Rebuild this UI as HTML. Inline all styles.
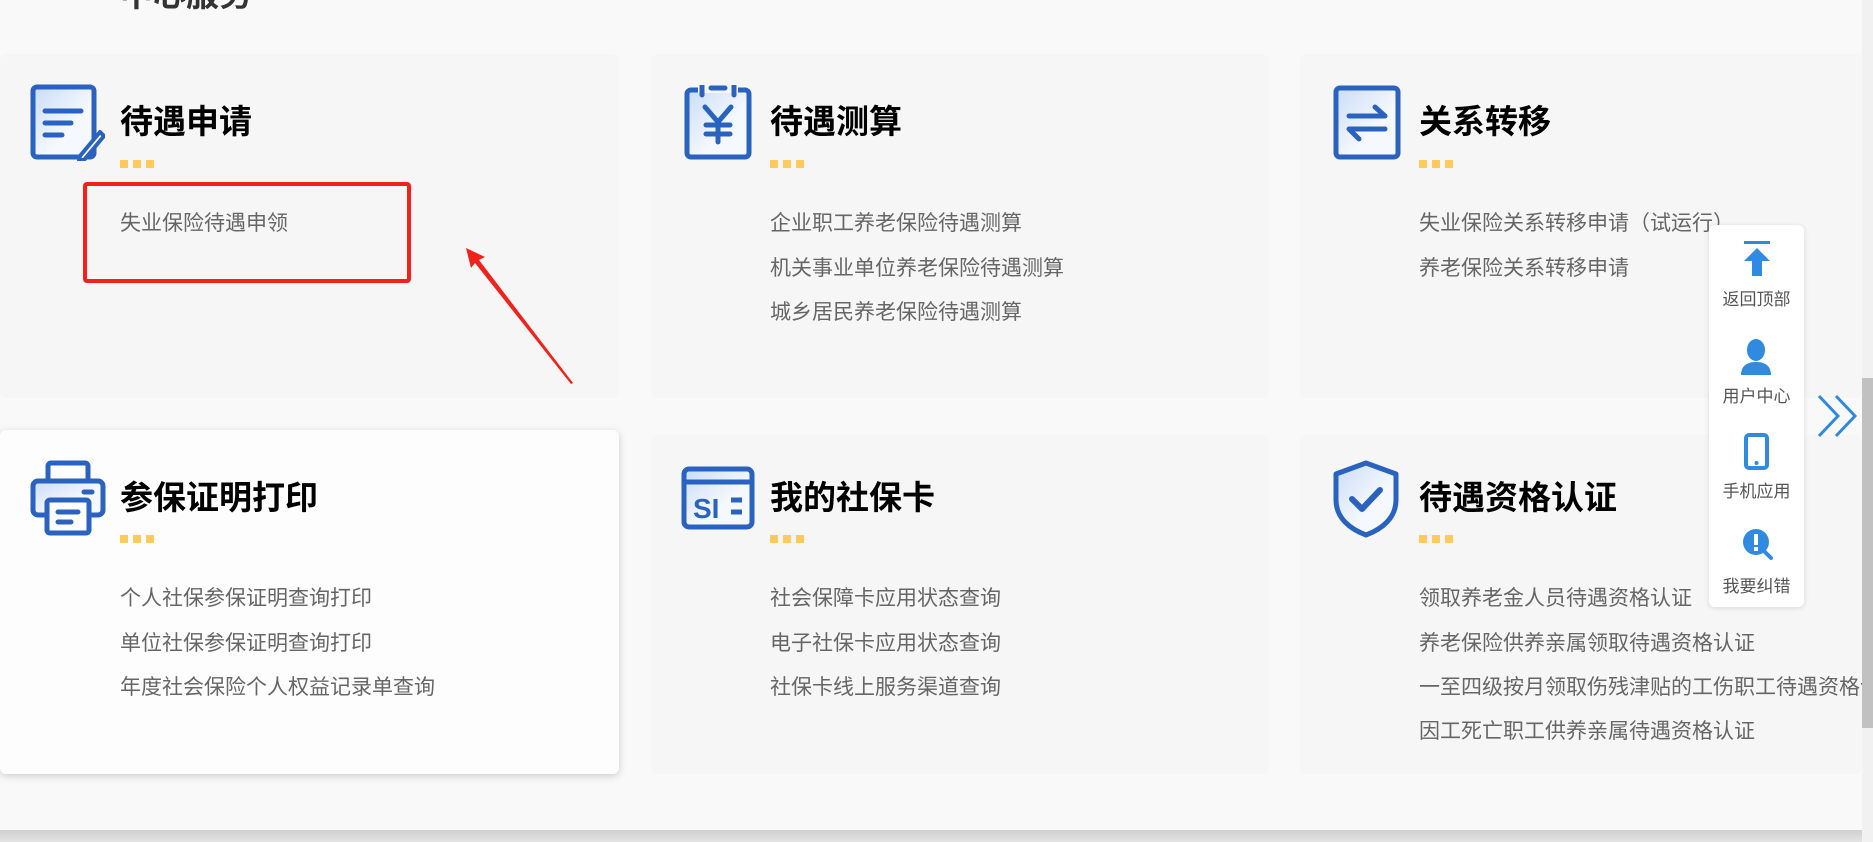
<!DOCTYPE html>
<html><head><meta charset="utf-8"><style>
*{margin:0;padding:0;box-sizing:border-box}
body{width:1873px;height:842px;overflow:hidden;background:#f9f9f9;font-family:"Liberation Sans","Noto Sans CJK SC",sans-serif;position:relative}
.card{position:absolute;background:#f6f6f6;border-radius:6px}
.card.hl{background:#fdfdfd;box-shadow:0 2px 8px rgba(0,0,0,.18)}
.ic{position:absolute}
.t{position:absolute;font-size:33px;font-weight:bold;color:#000;white-space:nowrap;line-height:40px}
.dots{position:absolute;width:40px;height:8px}
.dots i{display:inline-block;width:8px;height:8px;background:#ffc95c;margin-right:5px;vertical-align:top}
.l{position:absolute;font-size:21px;color:#666;white-space:nowrap;line-height:26px}
.side{position:absolute;left:1709px;top:225px;width:95px;height:382px;background:#fff;border-radius:6px;box-shadow:0 1px 6px rgba(0,0,0,.12)}
.side .lb{position:absolute;left:0;width:95px;text-align:center;font-size:17px;color:#555}
</style></head><body>
<div style="position:absolute;left:120px;top:-32px;font-size:33px;font-weight:bold;color:#333">中心服务</div>

<div class="card" style="left:0;top:54px;width:619px;height:344px"></div>
<div class="card" style="left:651px;top:54px;width:618px;height:344px"></div>
<div class="card" style="left:1300px;top:54px;width:562px;height:344px"></div>
<div class="card hl" style="left:0;top:430px;width:619px;height:344px"></div>
<div class="card" style="left:651px;top:435px;width:618px;height:339px"></div>
<div class="card" style="left:1300px;top:435px;width:562px;height:339px"></div>

<svg width="0" height="0" style="position:absolute"><defs><linearGradient id="g" x1="0" y1="0" x2="1" y2="1"><stop offset="0" stop-color="#c9dcf8"/><stop offset=".6" stop-color="#f5f8fd"/></linearGradient></defs></svg>

<svg class="ic" style="left:30px;top:84px" width="75" height="77" viewBox="0 0 75 77"><rect x="3" y="3" width="61" height="70" rx="4" fill="url(#g)" stroke="#2a62c0" stroke-width="5"/><path d="M15 27h36M15 39h26M15 51h17" stroke="#2a62c0" stroke-width="5" stroke-linecap="round"/><path d="M50 72l20-24 4 4-20 24h-5z" fill="#fff" stroke="#2a62c0" stroke-width="4" stroke-linejoin="round"/></svg>
<div class="t" style="left:120px;top:102px">待遇申请</div>
<div class="dots" style="left:120px;top:160px"><i></i><i></i><i></i></div>
<div class="l" style="left:120px;top:211px">失业保险待遇申领</div>

<svg class="ic" style="left:684px;top:85px" width="68" height="75" viewBox="0 0 68 75"><rect x="3" y="5" width="62" height="67" rx="4" fill="url(#g)" stroke="#2a62c0" stroke-width="5"/><rect x="14" y="0" width="40" height="8" fill="#f6f6f6"/><path d="M18 1v9M50 1v9M27 3h14" stroke="#2a62c0" stroke-width="5" stroke-linecap="round"/><path d="M21 22l13 15 13-15M34 37v20M22 40h24M22 49h24" stroke="#2a62c0" stroke-width="5" stroke-linecap="round" fill="none"/></svg>
<div class="t" style="left:770px;top:102px">待遇测算</div>
<div class="dots" style="left:770px;top:160px"><i></i><i></i><i></i></div>
<div class="l" style="left:770px;top:211px">企业职工养老保险待遇测算</div>
<div class="l" style="left:770px;top:256px">机关事业单位养老保险待遇测算</div>
<div class="l" style="left:770px;top:300px">城乡居民养老保险待遇测算</div>

<svg class="ic" style="left:1333px;top:85px" width="68" height="75" viewBox="0 0 68 75"><rect x="3" y="3" width="62" height="69" rx="4" fill="url(#g)" stroke="#2a62c0" stroke-width="5"/><path d="M16 31h36l-10-9M52 44H16l10 10" stroke="#2a62c0" stroke-width="5" stroke-linecap="round" stroke-linejoin="round" fill="none"/></svg>
<div class="t" style="left:1419px;top:102px">关系转移</div>
<div class="dots" style="left:1419px;top:160px"><i></i><i></i><i></i></div>
<div class="l" style="left:1419px;top:211px">失业保险关系转移申请（试运行）</div>
<div class="l" style="left:1419px;top:256px">养老保险关系转移申请</div>

<svg class="ic" style="left:30px;top:460px" width="76" height="76" viewBox="0 0 76 76"><rect x="18" y="3" width="40" height="20" rx="3" fill="#fff" stroke="#2a62c0" stroke-width="5"/><rect x="3" y="21" width="70" height="34" rx="5" fill="url(#g)" stroke="#2a62c0" stroke-width="5"/><path d="M54 32h8" stroke="#2a62c0" stroke-width="5" stroke-linecap="round"/><rect x="17" y="40" width="42" height="33" rx="3" fill="#fff" stroke="#2a62c0" stroke-width="5"/><path d="M28 52h20M28 62h13" stroke="#2a62c0" stroke-width="5" stroke-linecap="round"/></svg>
<div class="t" style="left:120px;top:478px">参保证明打印</div>
<div class="dots" style="left:120px;top:535px"><i></i><i></i><i></i></div>
<div class="l" style="left:120px;top:586px">个人社保参保证明查询打印</div>
<div class="l" style="left:120px;top:631px">单位社保参保证明查询打印</div>
<div class="l" style="left:120px;top:675px">年度社会保险个人权益记录单查询</div>

<svg class="ic" style="left:681px;top:466px" width="74" height="64" viewBox="0 0 74 64"><rect x="3" y="3" width="68" height="58" rx="5" fill="url(#g)" stroke="#2a62c0" stroke-width="5"/><path d="M3 16h68" stroke="#2a62c0" stroke-width="5"/><text x="12" y="52" font-family="Liberation Sans,sans-serif" font-weight="bold" font-size="28" fill="#2a62c0">SI</text><path d="M50 34h11M50 46h11" stroke="#2a62c0" stroke-width="5"/></svg>
<div class="t" style="left:770px;top:478px">我的社保卡</div>
<div class="dots" style="left:770px;top:535px"><i></i><i></i><i></i></div>
<div class="l" style="left:770px;top:586px">社会保障卡应用状态查询</div>
<div class="l" style="left:770px;top:631px">电子社保卡应用状态查询</div>
<div class="l" style="left:770px;top:675px">社保卡线上服务渠道查询</div>

<svg class="ic" style="left:1332px;top:460px" width="68" height="78" viewBox="0 0 68 78"><path d="M34 3L64 14v26c0 18-14 29-30 35C18 69 4 58 4 40V14z" fill="url(#g)" stroke="#2a62c0" stroke-width="5" stroke-linejoin="round"/><path d="M20 39l10 10 18-19" stroke="#2a62c0" stroke-width="6" fill="none" stroke-linecap="round" stroke-linejoin="round"/></svg>
<div class="t" style="left:1419px;top:478px">待遇资格认证</div>
<div class="dots" style="left:1419px;top:535px"><i></i><i></i><i></i></div>
<div class="l" style="left:1419px;top:586px">领取养老金人员待遇资格认证</div>
<div class="l" style="left:1419px;top:631px">养老保险供养亲属领取待遇资格认证</div>
<div class="l" style="left:1419px;top:675px;width:443px;overflow:hidden">一至四级按月领取伤残津贴的工伤职工待遇资格认证</div>
<div class="l" style="left:1419px;top:719px">因工死亡职工供养亲属待遇资格认证</div>

<div style="position:absolute;left:83px;top:182px;width:328px;height:101px;border:4px solid #f2211a;border-radius:4px"></div>
<svg style="position:absolute;left:0;top:0" width="700" height="420"><path d="M466 248L471 268 475 263 571 384 573 383 479 260 485 257z" fill="#f2211a"/></svg>

<div class="side">
<svg style="position:absolute;left:32px;top:16px" width="32" height="36" viewBox="0 0 32 36"><rect x="3" y="0" width="26" height="3" fill="#2f8ae0"/><path d="M16 7L3 20h8v15h10V20h8z" fill="#2f8ae0"/></svg>
<div class="lb" style="top:60px">返回顶部</div>
<svg style="position:absolute;left:31px;top:114px" width="32" height="36" viewBox="0 0 32 36"><ellipse cx="16" cy="11" rx="9" ry="11" fill="#2f8ae0"/><path d="M1 36c0-9 6-13 15-13s15 4 15 13z" fill="#2f8ae0"/></svg>
<div class="lb" style="top:157px">用户中心</div>
<svg style="position:absolute;left:35px;top:208px" width="25" height="37" viewBox="0 0 25 37"><rect x="2" y="2" width="21" height="33" rx="3" fill="none" stroke="#2f8ae0" stroke-width="4"/><circle cx="12.5" cy="30" r="2" fill="#2f8ae0"/></svg>
<div class="lb" style="top:252px">手机应用</div>
<svg style="position:absolute;left:33px;top:303px" width="32" height="34" viewBox="0 0 32 34"><circle cx="14" cy="14" r="13" fill="#2f8ae0"/><path d="M23 24l6 6" stroke="#2f8ae0" stroke-width="4" stroke-linecap="round"/><rect x="12" y="6" width="4" height="11" fill="#fff"/><rect x="12" y="19" width="4" height="4" fill="#fff"/></svg>
<div class="lb" style="top:347px">我要纠错</div>
</div>
<svg style="position:absolute;left:1816px;top:393px" width="44" height="46" viewBox="0 0 44 46"><path d="M3 3l19 20L3 43M20 3l19 20-19 20" stroke="#2f8ae0" stroke-width="3" fill="none"/></svg>

<div style="position:absolute;left:1862px;top:0;width:11px;height:842px;background:#f1f1f1"></div>
<div style="position:absolute;left:1862px;top:378px;width:11px;height:350px;background:#c1c1c1"></div>
<div style="position:absolute;left:0;top:830px;width:1862px;height:12px;background:linear-gradient(#cfcfcf,#e3e3e3)"></div>
</body></html>
